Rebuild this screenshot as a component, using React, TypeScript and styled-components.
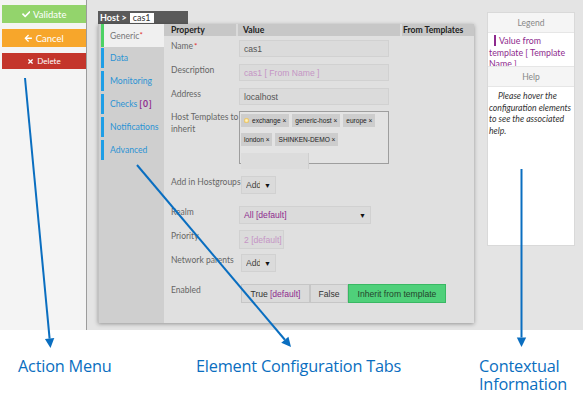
import React from 'react';
import styled, {createGlobalStyle} from 'styled-components';
import {FaCheck, FaArrowLeft, FaTimes} from 'react-icons/fa';

const GlobalStyle = createGlobalStyle`
  html, body {
    margin: 0;
    padding: 0;
    background: #ffffff;
  }
  body {
    font-family: Lato, "Liberation Sans", sans-serif;
  }
  * {
    box-sizing: border-box;
  }
`

const ANNOTATION = '#0a6ec0';

const Page = styled.div`
  position: relative;
  width: 583px;
  height: 411px;
  overflow: hidden;
  background: #ffffff;
`
const Screen = styled.div`
  display: flex;
  height: 330px;
`
const Sidebar = styled.div`
  width: 87px;
  background: #f4f4f4;
  border-right: 1px solid #9c9c9c;
  padding: 5px 0 0 2px;
  display: flex;
  flex-direction: column;
  gap: 6px;
`
const ActionButton = styled.div<{ $bg: string; $h: number; $size: number }>`
  height: ${p => p.$h}px;
  background: ${p => p.$bg};
  color: #ffffff;
  display: flex;
  align-items: center;
  justify-content: center;
  gap: 3px;
  font-size: ${p => p.$size}px;
  svg {
    width: ${p => p.$size - 1}px;
    height: ${p => p.$size - 1}px;
  }
`
const Workspace = styled.div`
  flex: 1;
  background: #e4e4e4;
  display: flex;
  align-items: flex-start;
  padding: 11px 0 0 11px;
  gap: 13px;
`
const Editor = styled.div`
  width: 376px;
  display: flex;
  flex-direction: column;
`
const Crumb = styled.div`
  width: 90px;
  height: 13px;
  background: #5a5a5a;
  display: flex;
  align-items: center;
  gap: 3px;
  padding-left: 2px;
  color: #ffffff;
  font-size: 9px;
  font-weight: 700;
`
const CrumbName = styled.span`
  background: #ffffff;
  color: #333333;
  font-weight: 400;
  height: 10px;
  line-height: 10px;
  padding: 0 3px;
`
const Panel = styled.div`
  height: 299px;
  display: flex;
  box-shadow: 0 1px 4px rgba(0, 0, 0, 0.35);
`
const TabList = styled.div`
  width: 66px;
  background: #cfcfcf;
  padding-left: 2px;
  border-left: 1px solid #c2c2c2;
`
const Tab = styled.div<{ $bar: string; $active?: boolean }>`
  height: ${p => (p.$active ? 23 : 20)}px;
  margin-bottom: ${p => (p.$active ? 1 : 3)}px;
  border-left: 3px solid ${p => p.$bar};
  background: ${p => (p.$active ? '#f0f0f0' : 'transparent')};
  color: ${p => (p.$active ? '#777777' : '#2b93d4')};
  display: flex;
  align-items: center;
  padding-left: 6px;
  font-size: 8.6px;
`
const Star = styled.span`
  color: #e03030;
  font-size: 8px;
  align-self: flex-start;
  margin-top: 6px;
`
const Required = styled.span`
  color: #e03030;
  font-size: 8px;
  margin-left: 1px;
`
const Count = styled.span`
  color: #8e2a8e;
  font-weight: 700;
  margin-left: 2px;
  letter-spacing: 1px;
`
const Content = styled.div`
  flex: 1;
  background: #e0e0e0;
  display: flex;
  flex-direction: column;
`
const HeaderRow = styled.div`
  display: flex;
  height: 12px;
  background: #c7c7c7;
  color: #222222;
  font-size: 8.6px;
  font-weight: 700;
  line-height: 12px;
`
const HeadCell = styled.div<{ $w?: number; $pad: number; $sep?: boolean }>`
  ${p => (p.$w ? `width: ${p.$w}px;` : 'flex: 1;')}
  padding-left: ${p => p.$pad}px;
  border-left: ${p => (p.$sep ? '2px solid #dadada' : 'none')};
`
const FieldRow = styled.div<{ $top: number }>`
  display: flex;
  align-items: flex-start;
  margin-top: ${p => p.$top}px;
`
const FieldLabel = styled.div`
  width: 75px;
  flex: none;
  padding-left: 7px;
  font-size: 8.5px;
  line-height: 12px;
  color: #666666;
  white-space: nowrap;
`
const Field = styled.div<{ $w: number; $h?: number; $color?: string; $ml?: number }>`
  width: ${p => p.$w}px;
  height: ${p => p.$h ?? 17}px;
  margin-left: ${p => p.$ml ?? 0}px;
  background: #dbdbdb;
  border: 1px solid #d1d1d1;
  color: ${p => p.$color ?? '#555555'};
  font-family: "Liberation Sans", Arial, sans-serif;
  font-size: 8.6px;
  display: flex;
  align-items: center;
  padding: 0 4px;
  white-space: nowrap;
  overflow: hidden;
`
const Clip = styled.span`
  width: 14px;
  overflow: hidden;
  color: #444444;
`
const Caret = styled.span`
  margin-left: auto;
  color: #111111;
  font-size: 7px;
`
const TagBox = styled.div`
  width: 150px;
  height: 53px;
  background: #e3e3e3;
  border: 1px solid #9e9e9e;
  padding: 2px 1px;
  display: flex;
  flex-wrap: wrap;
  align-content: flex-start;
  gap: 3px 3px;
`
const Tag = styled.span`
  height: 13px;
  background: #cdcdcd;
  color: #222222;
  font-family: "Liberation Sans", Arial, sans-serif;
  font-size: 6.6px;
  display: flex;
  align-items: center;
  gap: 3px;
  padding: 0 3px;
`
const TagIcon = styled.span`
  width: 5px;
  height: 5px;
  border-radius: 50%;
  background: radial-gradient(circle, #fff3c0 20%, #e9b43a 80%);
`
const TagInput = styled.div`
  width: 68px;
  height: 16px;
  background: #dcdcdc;
  border-right: 1px solid #cfcfcf;
  margin-top: 1px;
`
const Break = styled.div`
  flex-basis: 100%;
  height: 0;
`
const Toggle = styled.div`
  margin-left: 2px;
  display: flex;
  height: 19px;
  font-family: "Liberation Sans", Arial, sans-serif;
  font-size: 8.6px;
`
const ToggleOption = styled.div<{ $w: number; $on?: boolean }>`
  width: ${p => p.$w}px;
  background: ${p => (p.$on ? '#4fd07a' : '#dadada')};
  border: 1px solid ${p => (p.$on ? '#39b863' : '#c6c6c6')};
  color: ${p => (p.$on ? '#24452c' : '#333333')};
  display: flex;
  align-items: center;
  justify-content: center;
  gap: 2px;
`
const Purple = styled.span`
  color: #8e2a8e;
`
const SidePanel = styled.div`
  width: 88px;
  height: 234px;
  margin-top: 1px;
  background: #ffffff;
  border: 1px solid #d9d9d9;
  display: flex;
  flex-direction: column;
`
const SideTitle = styled.div`
  height: 20px;
  background: #f5f5f5;
  border-bottom: 1px solid #e6e6e6;
  color: #888888;
  font-size: 8.5px;
  display: flex;
  align-items: center;
  justify-content: center;
`
const LegendBody = styled.div`
  height: 34px;
  overflow: hidden;
  padding: 2px 0 0 1px;
  font-size: 8.8px;
  line-height: 11.5px;
  color: #8e2a8e;
  text-indent: 5px;
  border-bottom: 1px solid #e6e6e6;
`
const LegendMark = styled.span`
  border-left: 2px solid #8e2a8e;
  padding-left: 3px;
`
const HelpBody = styled.div`
  padding: 3px 1px 0 1px;
  font-size: 8.7px;
  font-style: italic;
  line-height: 11.5px;
  color: #333333;
  text-indent: 9px;
`
const Captions = styled.div`
  display: grid;
  grid-template-columns: 178px 283px 1fr;
  padding: 27px 0 0 18px;
  font-family: "Open Sans", "Noto Sans", sans-serif;
  font-size: 16.3px;
  line-height: 18px;
  color: ${ANNOTATION};
`
const Caption = styled.div`
  letter-spacing: -0.2px;
`
const Overlay = styled.svg`
  position: absolute;
  left: 0;
  top: 0;
  pointer-events: none;
`

type Pt = [number, number];

const Arrow = ({from, to}: { from: Pt; to: Pt }) => {
    const dx = to[0] - from[0];
    const dy = to[1] - from[1];
    const len = Math.hypot(dx, dy);
    const ux = dx / len;
    const uy = dy / len;
    const bx = to[0] - ux * 9.5;
    const by = to[1] - uy * 9.5;
    const px = -uy * 4.7;
    const py = ux * 4.7;
    return (
        <g>
            <line x1={from[0]} y1={from[1]} x2={bx} y2={by} stroke={ANNOTATION} strokeWidth={2}/>
            <polygon points={`${to[0]},${to[1]} ${bx + px},${by + py} ${bx - px},${by - py}`} fill={ANNOTATION}/>
        </g>
    );
};

const tabs = ['Data', 'Monitoring', 'Checks', 'Notifications', 'Advanced'];

export default function App() {
    return (
        <Page>
            <GlobalStyle/>
            <Screen>
                <Sidebar>
                    <ActionButton $bg="#93d46c" $h={18} $size={9.5}><FaCheck/>Validate</ActionButton>
                    <ActionButton $bg="#f7a62b" $h={18} $size={9.5}><FaArrowLeft/>Cancel</ActionButton>
                    <ActionButton $bg="#c4352b" $h={16} $size={8}><FaTimes/>Delete</ActionButton>
                </Sidebar>
                <Workspace>
                    <Editor>
                        <Crumb>Host &gt;<CrumbName>cas1</CrumbName></Crumb>
                        <Panel>
                            <TabList>
                                <Tab $bar="#4cd264" $active>Generic<Star>*</Star></Tab>
                                {tabs.map(t => (
                                    <Tab key={t} $bar="#1e9ee6">
                                        {t}{t === 'Checks' && <Count>[0]</Count>}
                                    </Tab>
                                ))}
                            </TabList>
                            <Content>
                                <HeaderRow>
                                    <HeadCell $w={72} $pad={7}>Property</HeadCell>
                                    <HeadCell $w={164} $pad={5} $sep>Value</HeadCell>
                                    <HeadCell $pad={1} $sep>From Templates</HeadCell>
                                </HeaderRow>
                                <FieldRow $top={4}>
                                    <FieldLabel>Name<Required>*</Required></FieldLabel>
                                    <Field $w={150}>cas1</Field>
                                </FieldRow>
                                <FieldRow $top={7}>
                                    <FieldLabel>Description</FieldLabel>
                                    <Field $w={150} $color="#c595c5">cas1 [ From Name ]</Field>
                                </FieldRow>
                                <FieldRow $top={7}>
                                    <FieldLabel>Address</FieldLabel>
                                    <Field $w={150}>localhost</Field>
                                </FieldRow>
                                <FieldRow $top={6}>
                                    <FieldLabel>Host Templates to<br/>inherit</FieldLabel>
                                    <TagBox>
                                        <Tag><TagIcon/>exchange ×</Tag>
                                        <Tag>generic-host ×</Tag>
                                        <Tag>europe ×</Tag>
                                        <Break/>
                                        <Tag>london ×</Tag>
                                        <Tag>SHINKEN-DEMO ×</Tag>
                                        <Break/>
                                        <TagInput/>
                                    </TagBox>
                                </FieldRow>
                                <FieldRow $top={12}>
                                    <FieldLabel>Add in Hostgroups</FieldLabel>
                                    <Field $w={35} $h={18} $ml={2}><Clip>Add</Clip><Caret>▼</Caret></Field>
                                </FieldRow>
                                <FieldRow $top={12}>
                                    <FieldLabel>Realm</FieldLabel>
                                    <Field $w={132} $h={18} $color="#8e2a8e">All [default]<Caret>▼</Caret></Field>
                                </FieldRow>
                                <FieldRow $top={6}>
                                    <FieldLabel>Priority</FieldLabel>
                                    <Field $w={45} $h={19} $color="#c595c5">2 [default]</Field>
                                </FieldRow>
                                <FieldRow $top={5}>
                                    <FieldLabel>Network parents</FieldLabel>
                                    <Field $w={35} $h={18} $ml={2}><Clip>Add</Clip><Caret>▼</Caret></Field>
                                </FieldRow>
                                <FieldRow $top={12}>
                                    <FieldLabel>Enabled</FieldLabel>
                                    <Toggle>
                                        <ToggleOption $w={69}>True <Purple>[default]</Purple></ToggleOption>
                                        <ToggleOption $w={38}>False</ToggleOption>
                                        <ToggleOption $w={98} $on>Inherit from template</ToggleOption>
                                    </Toggle>
                                </FieldRow>
                            </Content>
                        </Panel>
                    </Editor>
                    <SidePanel>
                        <SideTitle>Legend</SideTitle>
                        <LegendBody><LegendMark>Value from template [ Template Name ]</LegendMark></LegendBody>
                        <SideTitle>Help</SideTitle>
                        <HelpBody>Please hover the configuration elements to see the associated help.</HelpBody>
                    </SidePanel>
                </Workspace>
            </Screen>
            <Captions>
                <Caption>Action Menu</Caption>
                <Caption>Element Configuration Tabs</Caption>
                <Caption>Contextual<br/>Information</Caption>
            </Captions>
            <Overlay width={583} height={411} viewBox="0 0 583 411">
                <Arrow from={[25, 78]} to={[50.5, 348]}/>
                <Arrow from={[137, 165]} to={[291, 347]}/>
                <Arrow from={[521.5, 169]} to={[521.5, 347]}/>
            </Overlay>
        </Page>
    );
}
